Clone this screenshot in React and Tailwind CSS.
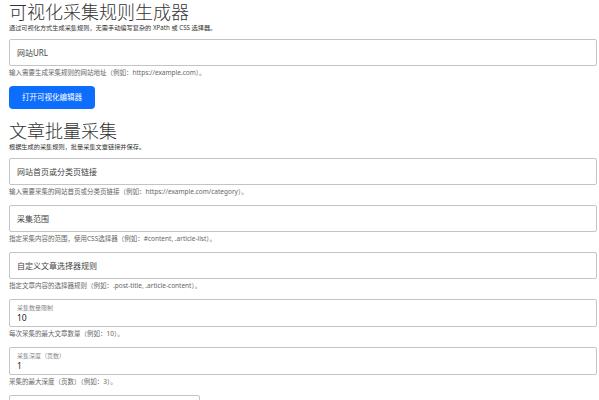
import React from 'react';

const font = { fontFamily: '"Noto Sans", "Noto Sans CJK SC", sans-serif' };

function TextField({ placeholder, help }) {
    return (
        <div>
            <div className="h-[27px] border border-[#c4c4c4] rounded-[2px] bg-white flex items-center px-[7px]">
                <span className="text-[8px] text-[#444]">{placeholder}</span>
            </div>
            <p className="mt-[2px] mb-[9px] text-[6.5px] leading-[9px] text-[#666]">{help}</p>
        </div>
    );
}

function FloatField({ label, value, help }) {
    return (
        <div>
            <div className="h-[28px] border border-[#c4c4c4] rounded-[2px] bg-white flex flex-col justify-center px-[7px]">
                <span className="text-[6px] leading-[8px] text-[#888]">{label}</span>
                <span className="text-[8.5px] leading-[11px] text-[#222]">{value}</span>
            </div>
            <p className="mt-[2px] mb-[9px] text-[6.5px] leading-[9px] text-[#666]">{help}</p>
        </div>
    );
}

export default function App() {
    return (
        <div className="w-[599px] h-[400px] overflow-hidden bg-white pl-[9px] pr-[2px]" style={font}>
            <h1 className="pt-[2px] text-[18px] leading-[20px] font-light text-[#333]">可视化采集规则生成器</h1>
            <p className="mt-[1px] text-[6.2px] leading-[9px] text-[#333]">通过可视化方式生成采集规则，无需手动编写复杂的 XPath 或 CSS 选择器。</p>

            <div className="mt-[7px]">
                <TextField placeholder="网站URL" help="输入需要生成采集规则的网站地址（例如：https://example.com）。" />
            </div>

            <button className="block w-[86px] h-[23px] rounded-[4px] bg-[#0d6efd] text-white text-[7.5px]">
                打开可视化编辑器
            </button>

            <h2 className="mt-[12px] text-[18px] leading-[20px] font-light text-[#333]">文章批量采集</h2>
            <p className="mt-[1px] text-[6.2px] leading-[9px] text-[#333]">根据生成的采集规则，批量采集文章链接并保存。</p>

            <div className="mt-[7px]">
                <TextField placeholder="网站首页或分类页链接" help="输入需要采集的网站首页或分类页链接（例如：https://example.com/category）。" />
                <TextField placeholder="采集范围" help="指定采集内容的范围，使用CSS选择器（例如：#content, .article-list）。" />
                <TextField placeholder="自定义文章选择器规则" help="指定文章内容的选择器规则（例如：.post-title, .article-content）。" />
                <FloatField label="采集数量限制" value="10" help="每次采集的最大文章数量（例如：10）。" />
                <FloatField label="采集深度（页数）" value="1" help="采集的最大深度（页数）（例如：3）。" />
                <div className="w-[191px] h-[28px] border border-[#c4c4c4] rounded-[2px]" />
            </div>
        </div>
    );
}
